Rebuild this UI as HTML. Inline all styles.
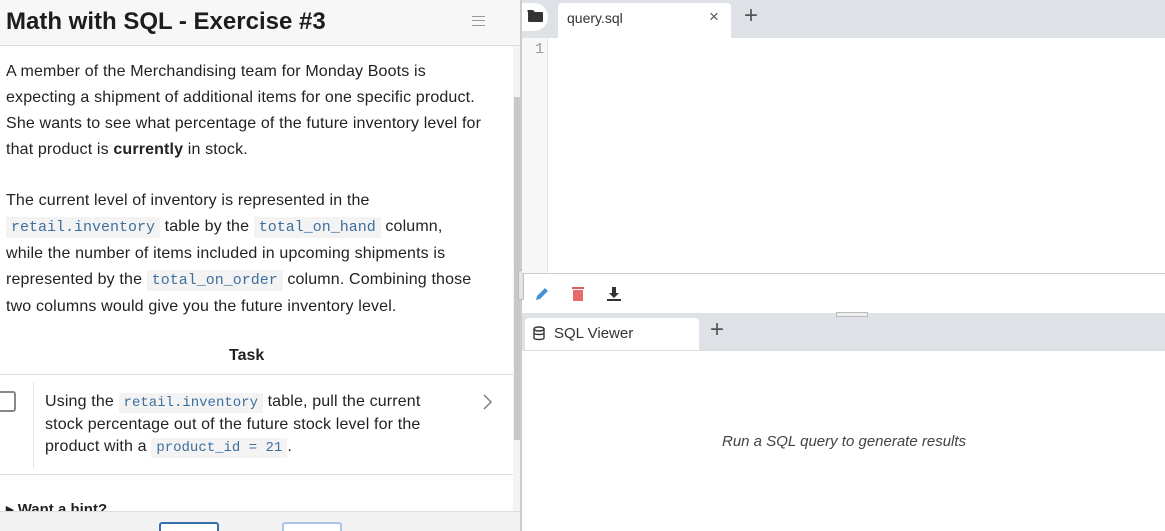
<!DOCTYPE html><html><head><style>
*{margin:0;padding:0;box-sizing:border-box}
html,body{width:1165px;height:531px;overflow:hidden}
body{background:#fff;font-family:"Liberation Sans",sans-serif;color:#222;position:relative}
.a{position:absolute}
p.t{position:absolute;left:6px;font-size:16px;letter-spacing:0.15px;line-height:26px;white-space:nowrap;color:#222}
code{font-family:"Liberation Mono",monospace;font-size:15px;letter-spacing:0;background:#f3f3f3;color:#3d6f9e;padding:2px 5px}
.k code{font-size:14px}
</style></head><body>
<div class="a" style="left:0;top:0;width:520px;height:46px;background:#f7f7f7;border-bottom:1px solid #ddd"></div>
<div class="a" style="left:6px;top:8px;font-size:24px;font-weight:bold;color:#1d1d1d">Math with SQL - Exercise #3</div>
<div class="a" style="left:472px;top:16px;width:13px;height:10px;border-top:1px solid #999;border-bottom:1px solid #999"><div style="margin-top:3px;border-top:1px solid #999"></div></div>
<div class="a" style="left:513px;top:46px;width:8px;height:465px;background:#f4f4f4"></div>
<div class="a" style="left:514px;top:97px;width:6px;height:343px;background:#c8c8c8"></div>
<p class="t" style="top:59px">A member of the Merchandising team for Monday Boots is<br>expecting a shipment of additional items for one specific product.<br>She wants to see what percentage of the future inventory level for<br>that product is <b>currently</b> in stock.</p>
<p class="t" style="top:188px">The current level of inventory is represented in the<br><code>retail.inventory</code> table by the <code>total_on_hand</code> column,<br>while the number of items included in upcoming shipments is<br>represented by the <code>total_on_order</code> column. Combining those<br>two columns would give you the future inventory level.</p>
<div class="a" style="left:229px;top:347px;font-size:16px;font-weight:bold">Task</div>
<div class="a" style="left:0;top:374px;width:513px;border-top:1px solid #ddd"></div>
<div class="a" style="left:-5px;top:391px;width:21px;height:21px;border:2px solid #888;border-radius:3px"></div>
<div class="a" style="left:33px;top:382px;height:86px;border-left:1px solid #e4e4e4"></div>
<p class="t k" style="left:45px;top:391px;line-height:22px">Using the <code>retail.inventory</code> table, pull the current<br>stock percentage out of the future stock level for the<br>product with a <code>product_id = 21</code>.</p>
<svg class="a" style="left:482px;top:393px" width="12" height="18"><path d="M2 2l7 7-7 7" fill="none" stroke="#777" stroke-width="1.4"/></svg>
<div class="a" style="left:0;top:474px;width:513px;border-top:1px solid #ddd"></div>
<div class="a" style="left:6px;top:500px;font-size:15px;font-weight:bold">▸ Want a hint?</div>
<div class="a" style="left:0;top:511px;width:521px;height:20px;background:#f2f2f2;border-top:1px solid #ddd"></div>
<div class="a" style="left:159px;top:522px;width:60px;height:20px;border:2px solid #3a6fb0;border-radius:3px;background:#fff"></div>
<div class="a" style="left:282px;top:522px;width:60px;height:20px;border:2px solid #a8c4e6;border-radius:3px;background:#fff"></div>
<div class="a" style="left:520px;top:0;width:2px;height:531px;background:#ccc"></div>
<div class="a" style="left:518px;top:270px;width:6px;height:30px;background:#e4e4e4;border:1px solid #bbb;border-radius:2px"></div>
<div class="a" style="left:522px;top:0;width:643px;height:38px;background:#dee1e6"></div>
<div class="a" style="left:522px;top:3px;width:26px;height:28px;background:#fff;border-radius:0 14px 14px 0"></div>
<svg class="a" style="left:527px;top:9px" width="17" height="14"><path d="M1 3a1 1 0 0 1 1-2h4l2 2h7a1 1 0 0 1 1 1v8a1 1 0 0 1-1 1H2a1 1 0 0 1-1-1z" fill="#333"/></svg>
<div class="a" style="left:558px;top:3px;width:173px;height:35px;background:#fff;border-radius:4px 4px 0 0"></div>
<div class="a" style="left:567px;top:10px;font-size:14px;color:#333">query.sql</div>
<div class="a" style="left:709px;top:7px;font-size:17px;color:#555">×</div>
<div class="a" style="left:744px;top:2px;font-size:24px;color:#555">+</div>
<div class="a" style="left:522px;top:38px;width:26px;height:235px;background:#f7f7f7;border-right:1px solid #e6e6e6"></div>
<div class="a" style="left:535px;top:41px;font-size:15px;color:#999;font-family:'Liberation Mono',monospace">1</div>
<div class="a" style="left:522px;top:273px;width:643px;border-top:1px solid #ccc"></div>
<svg class="a" style="left:534px;top:286px" width="16" height="16"><path d="M2 14l1-4 8-8 3 3-8 8z" fill="#4a90d9"/></svg>
<svg class="a" style="left:571px;top:286px" width="14" height="16"><rect x="1" y="1" width="12" height="2" fill="#e05c5c"/><rect x="2" y="4" width="10" height="11" fill="#e86a6a"/></svg>
<svg class="a" style="left:606px;top:286px" width="16" height="16"><path d="M6 1h4v6h3l-5 5-5-5h3z M1 13h14v2H1z" fill="#333"/></svg>
<div class="a" style="left:522px;top:313px;width:643px;height:37px;background:#dee1e6"></div>
<div class="a" style="left:836px;top:312px;width:32px;height:5px;border:1px solid #bbb;background:#eee"></div>
<div class="a" style="left:525px;top:318px;width:174px;height:32px;background:#fff;border-radius:4px 4px 0 0"></div>
<svg class="a" style="left:533px;top:326px" width="12" height="15"><ellipse cx="6" cy="3" rx="5" ry="2" fill="none" stroke="#333" stroke-width="1.4"/><path d="M1 3v9c0 2 10 2 10 0V3M1 7c0 2 10 2 10 0" fill="none" stroke="#333" stroke-width="1.4"/></svg>
<div class="a" style="left:554px;top:325px;font-size:15px;color:#333">SQL Viewer</div>
<div class="a" style="left:710px;top:316px;font-size:24px;color:#555">+</div>
<div class="a" style="left:522px;top:350px;width:643px;border-top:1px solid #ddd"></div>
<div class="a" style="left:722px;top:433px;font-size:15px;font-style:italic;color:#444">Run a SQL query to generate results</div>
</body></html>
